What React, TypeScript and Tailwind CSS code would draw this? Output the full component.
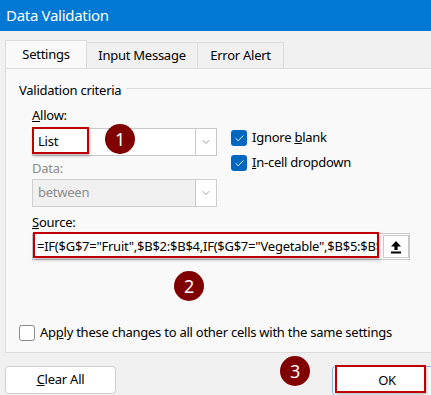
import { ChevronDown, Check } from "lucide-react";

const font = { fontFamily: '"Noto Sans", "Segoe UI", sans-serif' };

function Dropdown({ value, disabled }: { value: string; disabled?: boolean }) {
    return (
        <div
            className={`flex h-[28px] w-[185px] items-stretch border ${
                disabled ? "border-[#cfcfcf] bg-[#f0f0f0] text-[#8c8c8c]" : "border-[#c9c9c9] bg-white text-black"
            }`}
        >
            <div className="flex flex-1 items-center pl-[5px]">{value}</div>
            <div className="flex w-[21px] items-center justify-center border-l border-[#c9c9c9] bg-white">
                <ChevronDown size={12} strokeWidth={1.2} className="text-[#555]" />
            </div>
        </div>
    );
}

function BlueCheck({ label }: { label: React.ReactNode }) {
    return (
        <div className="flex h-[16px] items-center gap-[5px] text-black">
            <span className="flex h-[16px] w-[16px] items-center justify-center rounded-[3px] bg-[#0067c0]">
                <Check size={11} strokeWidth={2} className="text-white" />
            </span>
            <span>{label}</span>
        </div>
    );
}

function Callout({ n, className }: { n: number; className: string }) {
    return (
        <div
            className={`absolute flex h-[30px] w-[30px] items-center justify-center rounded-full bg-[#800000] text-[18px] text-white ${className}`}
        >
            {n}
        </div>
    );
}

export default function App() {
    return (
        <div
            className="relative h-[395px] w-[431px] overflow-hidden bg-[#f0f0f0] text-[13px] tracking-[-0.25px]"
            style={font}
        >
            <div className="flex h-[31px] items-center bg-[#0078d4] pl-[6px] text-[15px] tracking-[-0.3px] text-white">
                Data Validation
            </div>

            <div className="ml-[5px] mt-[9px] flex items-end text-black">
                <div className="flex h-[28px] w-[82px] items-center justify-center border border-b-0 border-[#dcdcdc] bg-[#f9f9f9]">
                    Settings
                </div>
                <div className="flex h-[26px] w-[111px] items-center justify-center border border-b-0 border-l-0 border-[#dcdcdc]">
                    Input Message
                </div>
                <div className="flex h-[26px] w-[86px] items-center justify-center border border-b-0 border-l-0 border-[#dcdcdc]">
                    Error Alert
                </div>
            </div>

            <div className="ml-[5px] h-[285px] w-[440px] border border-[#dcdcdc] bg-[#f9f9f9]">
                <div className="mt-[12px] flex h-[20px] items-center pl-[13px] text-black">
                    <span>Validation criteria</span>
                    <div className="ml-[5px] mt-[-5px] h-px flex-1 bg-[#dcdcdc]" />
                </div>

                <div className="pl-[26px]">
                    <div className="mt-[5px] flex h-[20px] items-center">
                        <span>
                            <u>A</u>llow:
                        </span>
                    </div>
                    <div className="mt-[2px] flex">
                        <div className="flex flex-col">
                            <Dropdown value="List" />
                            <div className="mt-[3px] flex h-[20px] items-center text-[#8c8c8c]">Data:</div>
                            <Dropdown value="between" disabled />
                        </div>
                        <div className="ml-[14px] mt-[2px] flex flex-col gap-[9px]">
                            <BlueCheck
                                label={
                                    <>
                                        Ignore <u>b</u>lank
                                    </>
                                }
                            />
                            <BlueCheck
                                label={
                                    <>
                                        <u>I</u>n-cell dropdown
                                    </>
                                }
                            />
                        </div>
                    </div>

                    <div className="mt-[6px] flex h-[20px] items-center">
                        <span>
                            <u>S</u>ource:
                        </span>
                    </div>
                    <div className="flex h-[27px] w-[378px] items-center border border-[#c9c9c9] bg-white">
                        <div className="w-[345px] overflow-hidden whitespace-nowrap pl-[4px] text-[13px]">
                            =IF($G$7="Fruit",$B$2:$B$4,IF($G$7="Vegetable",$B$5:$B$7,""))
                        </div>
                        <div className="ml-[5px] flex h-[23px] w-[26px] items-center justify-center border border-[#c9c9c9] bg-white">
                            <svg width="12" height="14" viewBox="0 0 12 14">
                                <path d="M6 1 L11 6.5 L7.6 6.5 L7.6 10 L4.4 10 L4.4 6.5 L1 6.5 Z" fill="#000" />
                                <rect x="1" y="11.5" width="10" height="2" fill="#000" />
                            </svg>
                        </div>
                    </div>
                </div>

                <div className="mt-[63px] flex items-center gap-[5px] pl-[13px]">
                    <span className="h-[16px] w-[16px] rounded-[3px] border border-[#8a8a8a] bg-white" />
                    <span>
                        Ap<u>p</u>ly these changes to all other cells with the same settings
                    </span>
                </div>
            </div>

            <div className="mt-[13px] flex items-start px-[5px]">
                <div className="flex h-[28px] w-[111px] items-center justify-center rounded-[4px] border border-[#d0d0d0] bg-white">
                    <span>
                        <u>C</u>lear All
                    </span>
                </div>
                <div className="ml-auto mr-[-10px] flex h-[30px] w-[104px] items-center justify-center rounded-[4px] border border-[#8fb4d9] bg-white">
                    <span className="ml-[6px]">OK</span>
                </div>
            </div>

            <div className="absolute left-[32px] top-[127px] h-[27px] w-[57px] border-2 border-[#c00000] shadow-[1px_2px_3px_rgba(0,0,0,0.25)]" />
            <div className="absolute left-[33px] top-[232px] h-[26px] w-[346px] border-2 border-[#c00000] shadow-[1px_2px_3px_rgba(0,0,0,0.25)]" />
            <div className="absolute left-[335px] top-[365px] h-[28px] w-[91px] border-2 border-[#c00000] shadow-[1px_2px_3px_rgba(0,0,0,0.25)]" />

            <Callout n={1} className="left-[105px] top-[124px]" />
            <Callout n={2} className="left-[174px] top-[271px]" />
            <Callout n={3} className="left-[280px] top-[356px]" />
        </div>
    );
}
